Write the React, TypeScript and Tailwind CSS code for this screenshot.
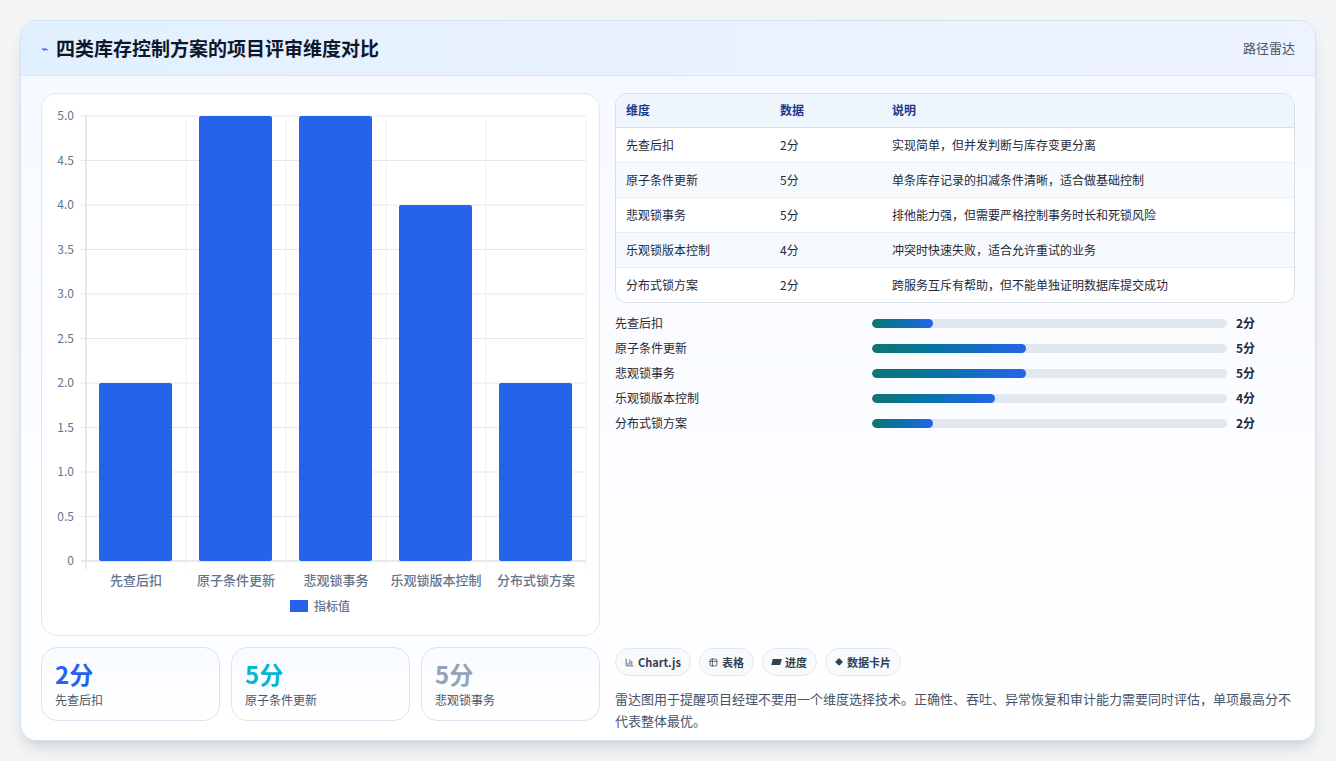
import { Table2, BarChart3 } from 'lucide-react';

const rows = [
  { name: '先查后扣', score: 2, note: '实现简单，但并发判断与库存变更分离', bar: 61 },
  { name: '原子条件更新', score: 5, note: '单条库存记录的扣减条件清晰，适合做基础控制', bar: 154 },
  { name: '悲观锁事务', score: 5, note: '排他能力强，但需要严格控制事务时长和死锁风险', bar: 154 },
  { name: '乐观锁版本控制', score: 4, note: '冲突时快速失败，适合允许重试的业务', bar: 123 },
  { name: '分布式锁方案', score: 2, note: '跨服务互斥有帮助，但不能单独证明数据库提交成功', bar: 61 },
];

const font = { fontFamily: '"Noto Sans CJK SC", "Noto Sans", sans-serif' };

function Chart() {
  const x0 = 44, x1 = 544, yTop = 22, yBot = 467;
  const unit = (yBot - yTop) / 5;
  const ticks = [0, 0.5, 1, 1.5, 2, 2.5, 3, 3.5, 4, 4.5, 5];
  return (
    <svg width="556" height="541" className="block" style={font}>
      {ticks.map(t => {
        const y = yBot - t * unit;
        return (
          <g key={t}>
            <line x1={x0 - 5} x2={x1} y1={y} y2={y} stroke={t === 0 ? '#cbd5e1' : '#e5e7eb'} />
            <text x={x0 - 12} y={y + 4} textAnchor="end" fontSize="12" fill="#64748b">
              {t === 0 ? '0' : t.toFixed(1)}
            </text>
          </g>
        );
      })}
      {[0, 1, 2, 3, 4, 5].map(i => (
        <line key={i} x1={x0 + i * 100} x2={x0 + i * 100} y1={yTop} y2={yBot + 8} stroke={i === 0 ? '#cbd5e1' : '#eef0f3'} />
      ))}
      {rows.map((r, i) => (
        <g key={r.name}>
          <rect x={x0 + i * 100 + 13} y={yBot - r.score * unit} width="73" height={r.score * unit} fill="#2563eb" rx="2" />
          <text x={x0 + i * 100 + 50} y={yBot + 24} textAnchor="middle" fontSize="13" fill="#64748b" fontWeight="500">
            {r.name}
          </text>
        </g>
      ))}
      <rect x="248" y="506" width="18" height="12" fill="#2563eb" />
      <text x="272" y="517" fontSize="12" fill="#64748b" fontWeight="500">指标值</text>
    </svg>
  );
}

export default function App() {
  return (
    <div className="min-h-screen bg-[#f3f4f6] p-5 pb-0" style={font}>
      <div className="rounded-2xl border border-[#cfe3f3] bg-gradient-to-b from-[#f5f9ff] to-white shadow-lg overflow-hidden h-[721px] flex flex-col">
        <header className="h-[55px] flex items-center justify-between px-5 bg-gradient-to-r from-[#e2f0fd] to-[#eef4ff] border-b border-[#d7e7f6]">
          <div className="flex items-center gap-2">
            <span className="text-[#2563eb] text-xs">⌁</span>
            <h1 className="text-[19px] font-bold text-[#0f172a]">四类库存控制方案的项目评审维度对比</h1>
          </div>
          <span className="text-[13px] text-[#475569]">路径雷达</span>
        </header>
        <div className="flex gap-[15px] px-5 pt-[17px]">
          <div className="w-[559px] flex flex-col gap-[11px]">
            <div className="rounded-2xl border border-[#e2e8f0] bg-white">
              <Chart />
            </div>
            <div className="grid grid-cols-3 gap-[11px]">
              {[
                ['2分', '先查后扣', 'text-[#2563eb]'],
                ['5分', '原子条件更新', 'text-[#06b6d4]'],
                ['5分', '悲观锁事务', 'text-[#94a3b8]'],
              ].map(([v, l, c]) => (
                <div key={l} className="h-[74px] rounded-2xl border border-[#dbe5f1] bg-gradient-to-b from-[#f8fbff] to-white px-[13px] pt-[11px]">
                  <div className={`text-[24px] font-bold leading-[30px] ${c}`}>{v}</div>
                  <div className="text-[12px] text-[#475569] mt-[2px]">{l}</div>
                </div>
              ))}
            </div>
          </div>
          <div className="flex-1 flex flex-col">
            <div className="rounded-xl border border-[#d6dee8] overflow-hidden bg-white">
              <table className="w-full text-[12px] text-left">
                <thead className="bg-[#eef5fd] text-[#1e3a8a]">
                  <tr className="h-[33px] border-b border-[#d6dee8]">
                    <th className="pl-[10px] w-[164px] font-semibold">维度</th>
                    <th className="w-[112px] font-semibold">数据</th>
                    <th className="font-semibold">说明</th>
                  </tr>
                </thead>
                <tbody className="text-[#1f2937]">
                  {rows.map((r, i) => (
                    <tr key={r.name} className={`h-[35px] ${i < 4 ? 'border-b border-[#e5edf5]' : ''} ${i % 2 ? 'bg-[#f7fafc]' : 'bg-white'}`}>
                      <td className="pl-[10px]">{r.name}</td>
                      <td>{r.score}分</td>
                      <td>{r.note}</td>
                    </tr>
                  ))}
                </tbody>
              </table>
            </div>
            <div className="flex flex-col gap-[7px] mt-[11px]">
              {rows.map(r => (
                <div key={r.name} className="flex items-center h-[18px] text-[12px] text-[#1f2937]">
                  <div className="w-[257px]">{r.name}</div>
                  <div className="w-[355px] h-[9px] rounded-full bg-[#e2e8f0] overflow-hidden">
                    <div className="h-full rounded-full bg-gradient-to-r from-[#0f766e] to-[#2563eb]" style={{ width: r.bar }} />
                  </div>
                  <div className="ml-[9px] font-bold">{r.score}分</div>
                </div>
              ))}
            </div>
            <div className="flex gap-2 mt-[216px] text-[11px] font-semibold text-[#334155]">
              <span className="h-[28px] px-[9px] rounded-full border border-[#e2e8f0] bg-[#f8fafc] flex items-center gap-1"><BarChart3 size={9} />Chart.js</span>
              <span className="h-[28px] px-[9px] rounded-full border border-[#e2e8f0] bg-[#f8fafc] flex items-center gap-1"><Table2 size={9} />表格</span>
              <span className="h-[28px] px-[9px] rounded-full border border-[#e2e8f0] bg-[#f8fafc] flex items-center gap-1"><span className="w-[9px] h-[6px] bg-[#334155] skew-x-[-15deg]" />进度</span>
              <span className="h-[28px] px-[9px] rounded-full border border-[#e2e8f0] bg-[#f8fafc] flex items-center gap-1"><span className="text-[8px]">◆</span>数据卡片</span>
            </div>
            <p className="mt-[12px] text-[13px] leading-[22px] text-[#475569]">
              雷达图用于提醒项目经理不要用一个维度选择技术。正确性、吞吐、异常恢复和审计能力需要同时评估，单项最高分不代表整体最优。
            </p>
          </div>
        </div>
      </div>
    </div>
  );
}
